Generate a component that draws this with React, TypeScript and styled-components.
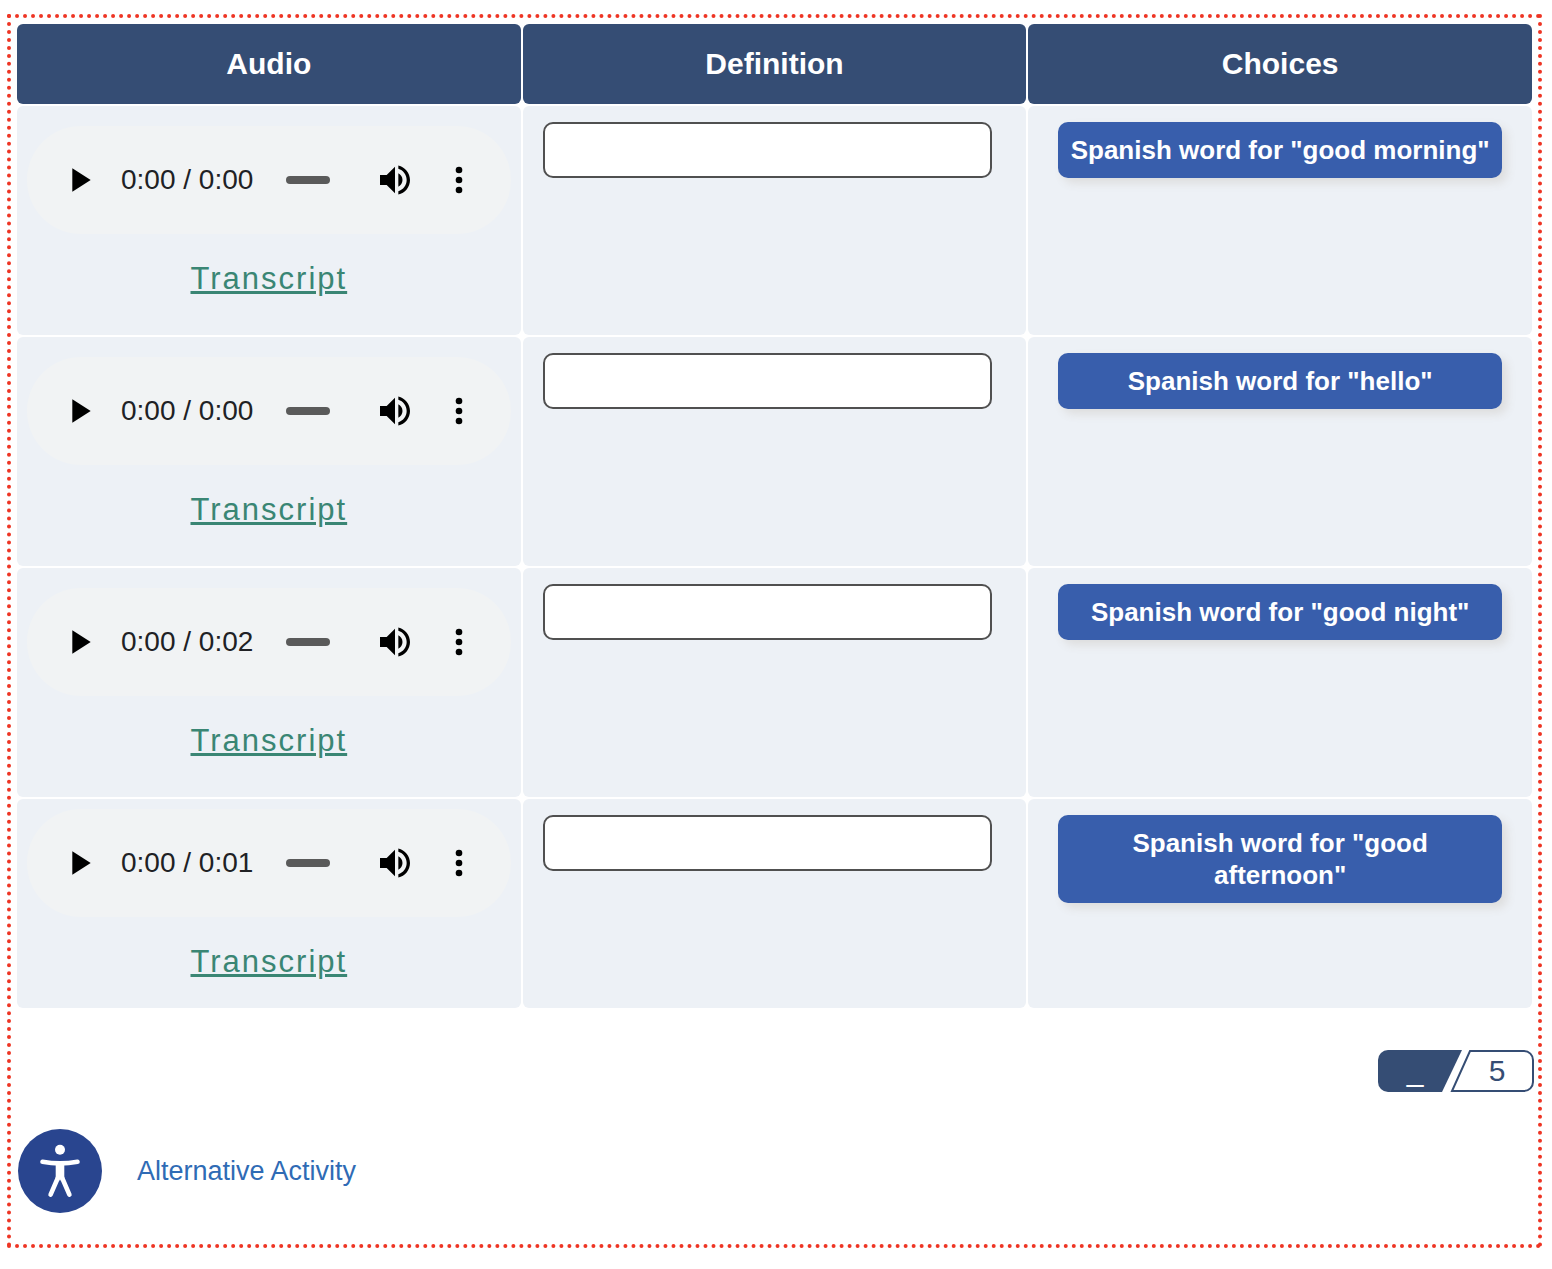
import React, { useState } from "react";
import styled, { createGlobalStyle } from "styled-components";

const GlobalStyle = createGlobalStyle`
  *, *::before, *::after { box-sizing: border-box; }
  body {
    margin: 0;
    background: #ffffff;
    font-family: "Liberation Sans", Arial, Helvetica, sans-serif;
  }
`;

const Frame = styled.main`
  margin: 14px 10px 20px 7px;
  padding: 4px;
  border: 4px dotted #ee3524;
`;

const MatchTable = styled.table`
  width: 100%;
  table-layout: fixed;
  border-collapse: separate;
  border-spacing: 2px;
`;

const HeadCell = styled.th`
  height: 80px;
  padding: 0;
  border-radius: 6px;
  background: #354d74;
  color: #ffffff;
  font-size: 30px;
  line-height: 36px;
`;

const Cell = styled.td`
  padding: 16px 30px;
  border-radius: 6px;
  background: #edf1f6;
  vertical-align: top;
`;

const AudioCell = styled(Cell)<{ $compact: boolean }>`
  padding: ${(p) => (p.$compact ? "10px" : "20px 10px")};
`;

const AnswerCell = styled(Cell)`
  padding: 16px 34px 16px 20px;
`;

const Player = styled.div`
  display: flex;
  align-items: center;
  height: 108px;
  padding: 0 32px;
  border-radius: 54px;
  background: #f1f3f4;
`;

const IconButton = styled.button`
  flex: none;
  display: flex;
  padding: 0;
  border: 0;
  background: none;
  color: #000000;
  cursor: pointer;

  svg {
    display: block;
    width: 40px;
    height: 40px;
    fill: currentColor;
  }
`;

const Time = styled.span`
  flex: none;
  margin-left: 22px;
  color: #202124;
  font-size: 28px;
  line-height: 36px;
  white-space: nowrap;
`;

const Seek = styled.input`
  flex: 1;
  min-width: 0;
  height: 8px;
  margin: 0 45px 0 33px;
  border-radius: 4px;
  background: #5a5a5a;
  appearance: none;

  &::-webkit-slider-thumb {
    appearance: none;
    width: 0;
    height: 0;
  }
`;

const MoreButton = styled(IconButton)`
  margin-left: 24px;
`;

const TranscriptLine = styled.div`
  padding: 27px 0 18px;
  text-align: center;
  line-height: 36px;
`;

const TranscriptLink = styled.a`
  display: block;
  color: #3a8674;
  font-size: 31px;
  letter-spacing: 2px;
  text-decoration: underline;
  text-decoration-thickness: 3px;
`;

const AnswerInput = styled.input`
  display: block;
  width: 100%;
  height: 56px;
  padding: 10px;
  border: 2px solid #505050;
  border-radius: 10px;
  background: #ffffff;
  font-family: inherit;
  font-size: 26px;
`;

const Choice = styled.button`
  display: block;
  width: 100%;
  padding: 12px 10px;
  border: 0;
  border-radius: 10px;
  background: #385eac;
  box-shadow: 5px 5px 10px #dddddd;
  color: #ffffff;
  font-family: inherit;
  font-size: 26px;
  font-weight: 700;
  line-height: 32px;
  cursor: grab;
`;

const ScoreRow = styled.div`
  display: flex;
  justify-content: flex-end;
  margin-top: 40px;
`;

const Score = styled.div`
  display: grid;
  grid-template-columns: 74px 74px;
  column-gap: 8px;
  font-size: 30px;
  line-height: 42px;
  text-align: center;
`;

const ScoreShape = styled.svg`
  grid-area: 1 / 1 / 2 / 3;
  width: 156px;
  height: 42px;
`;

const ScoreEarned = styled.span`
  grid-area: 1 / 1;
  color: #ffffff;
`;

const ScoreTotal = styled.span`
  grid-area: 1 / 2;
  color: #354d74;
`;

const Footer = styled.footer`
  display: flex;
  align-items: center;
  gap: 35px;
  padding: 37px 3px 27px;
`;

const AccessIcon = styled.svg`
  flex: none;
  width: 84px;
  height: 84px;
`;

const AltLink = styled.a`
  color: #2f6bb5;
  font-size: 27px;
  line-height: 32px;
  text-decoration: none;
`;

const rows = [
  { time: "0:00 / 0:00", choice: 'Spanish word for "good morning"' },
  { time: "0:00 / 0:00", choice: 'Spanish word for "hello"' },
  { time: "0:00 / 0:02", choice: 'Spanish word for "good night"' },
  { time: "0:00 / 0:01", choice: 'Spanish word for "good afternoon"' },
];

function AudioPlayer({ time, label }: { time: string; label: string }) {
  return (
    <Player role="group" aria-label={label}>
      <IconButton type="button" aria-label="Play">
        <svg viewBox="0 0 24 24" aria-hidden="true">
          <path d="M8 5v14l11-7z" />
        </svg>
      </IconButton>
      <Time>{time}</Time>
      <Seek type="range" min={0} max={100} defaultValue={0} aria-label="Seek" />
      <IconButton type="button" aria-label="Mute">
        <svg viewBox="0 0 24 24" aria-hidden="true">
          <path d="M3 9v6h4l5 5V4L7 9H3zm13.5 3c0-1.77-1.02-3.29-2.5-4.03v8.05c1.48-.73 2.5-2.25 2.5-4.02zM14 3.23v2.06c2.89.86 5 3.54 5 6.71s-2.11 5.85-5 6.71v2.06c4.01-.91 7-4.49 7-8.77s-2.99-7.86-7-8.77z" />
        </svg>
      </IconButton>
      <MoreButton type="button" aria-label="More options">
        <svg viewBox="0 0 24 24" aria-hidden="true">
          <circle cx="12" cy="6" r="2" />
          <circle cx="12" cy="12" r="2" />
          <circle cx="12" cy="18" r="2" />
        </svg>
      </MoreButton>
    </Player>
  );
}

export default function App() {
  const [answers, setAnswers] = useState<string[]>(rows.map(() => ""));

  const update = (index: number, value: string) =>
    setAnswers((prev) => prev.map((a, i) => (i === index ? value : a)));

  return (
    <>
      <GlobalStyle />
      <Frame>
        <MatchTable>
          <thead>
            <tr>
              <HeadCell scope="col">Audio</HeadCell>
              <HeadCell scope="col">Definition</HeadCell>
              <HeadCell scope="col">Choices</HeadCell>
            </tr>
          </thead>
          <tbody>
            {rows.map((row, i) => (
              <tr key={row.choice}>
                <AudioCell $compact={i === rows.length - 1}>
                  <AudioPlayer time={row.time} label={`Audio ${i + 1}`} />
                  <TranscriptLine>
                    <TranscriptLink href="#transcript">Transcript</TranscriptLink>
                  </TranscriptLine>
                </AudioCell>
                <AnswerCell>
                  <AnswerInput
                    type="text"
                    aria-label={`Definition ${i + 1}`}
                    value={answers[i]}
                    onChange={(e) => update(i, e.target.value)}
                  />
                </AnswerCell>
                <Cell>
                  <Choice type="button" draggable>
                    {row.choice}
                  </Choice>
                </Cell>
              </tr>
            ))}
          </tbody>
        </MatchTable>

        <ScoreRow>
          <Score>
            <ScoreShape viewBox="0 0 156 42" aria-hidden="true">
              <path d="M10 0H84L64 42H10A10 10 0 0 1 0 32V10A10 10 0 0 1 10 0Z" fill="#354d74" />
              <path
                d="M92 1H146A9 9 0 0 1 155 10V32A9 9 0 0 1 146 41H74Z"
                fill="#ffffff"
                stroke="#354d74"
                strokeWidth="2"
              />
            </ScoreShape>
            <ScoreEarned>_</ScoreEarned>
            <ScoreTotal>5</ScoreTotal>
          </Score>
        </ScoreRow>

        <Footer>
          <AccessIcon viewBox="0 0 84 84" aria-hidden="true">
            <circle cx="42" cy="42" r="42" fill="#29458f" />
            <circle cx="42" cy="20.7" r="5" fill="#ffffff" />
            <path
              d="M24.5 32.8Q42 36 59.5 32.8M39.8 49L32.6 65.6M44.2 49L51.4 65.6"
              fill="none"
              stroke="#ffffff"
              strokeWidth="4.6"
              strokeLinecap="round"
              strokeLinejoin="round"
            />
            <path d="M37.7 34H46.3V49.5L43 52L42 50L41 52L37.7 49.5Z" fill="#ffffff" />
          </AccessIcon>
          <AltLink href="#alternative">Alternative Activity</AltLink>
        </Footer>
      </Frame>
    </>
  );
}
